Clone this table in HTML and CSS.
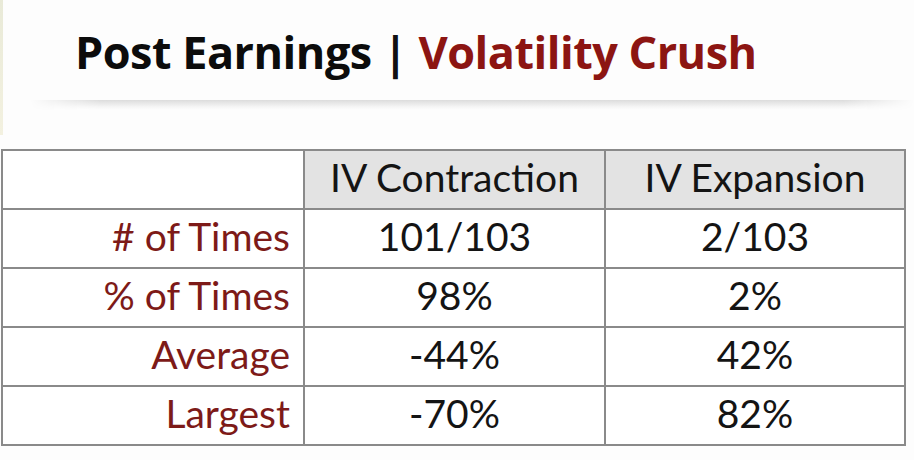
FILE: index.html
```html
<!DOCTYPE html>
<html>
<head>
<meta charset="utf-8">
<link rel="stylesheet" href="styles.css">
</head>
<body>
<div class="slide">
  <div class="edge"></div>
  <header class="title-bar">
    <h1 class="title"><span class="t-dark">Post Earnings</span> <span class="t-sep">|</span> <span class="t-red">Volatility Crush</span></h1>
  </header>
  <div class="shadow"></div>
  <table class="stats">
    <colgroup>
      <col class="c1"><col class="c2"><col class="c3">
    </colgroup>
    <tr class="head">
      <th class="blank"></th>
      <th>IV Contraction</th>
      <th>IV Expansion</th>
    </tr>
    <tr><td class="label"># of Times</td><td>101/103</td><td>2/103</td></tr>
    <tr><td class="label">% of Times</td><td>98%</td><td>2%</td></tr>
    <tr><td class="label">Average</td><td>-44%</td><td>42%</td></tr>
    <tr><td class="label">Largest</td><td>-70%</td><td>82%</td></tr>
  </table>
</div>
</body>
</html>
```
FILE: styles.css
```css
html, body {
  margin: 0;
  padding: 0;
  background: #fdfdfd;
}
.slide {
  position: relative;
  width: 914px;
  height: 460px;
  overflow: hidden;
  font-family: "Open Sans", "Liberation Sans", sans-serif;
}
.edge {
  position: absolute;
  left: 0;
  top: 0;
  width: 3px;
  height: 135px;
  background: linear-gradient(#e9ead8, #f3f1e0);
}
.title-bar {
  padding: 24px 0 0 75px;
  height: 74px;
}
.title {
  margin: 0;
  font-size: 45px;
  line-height: 56px;
  font-weight: 700;
  letter-spacing: -0.5px;
  white-space: nowrap;
}
.t-dark { color: #0c0c0c; }
.t-sep { color: #111; font-weight: 700; }
.t-red { color: #8c1512; }
.shadow {
  margin-left: 30px;
  height: 10px;
  margin-top: 2px;
  background: linear-gradient(#dcdcdc, #f6f6f6 70%, #fdfdfd);
  -webkit-mask-image: linear-gradient(90deg, transparent, #000 8%, #000 92%, transparent);
}
.stats {
  margin: 39px 0 0 1px;
  border-collapse: collapse;
  table-layout: fixed;
  width: 903px;
  background: #fff;
}
.c1 { width: 302px; }
.c2 { width: 301px; }
.c3 { width: 300px; }
.stats th, .stats td {
  border: 2px solid #8a8a8a;
  height: 53px;
  padding: 0 0 4px;
  font-family: Lato, "Open Sans", sans-serif;
  font-size: 39px;
  font-weight: 400;
  color: #141414;
  text-align: center;
  line-height: 1;
}
.stats th {
  background: #e3e3e3;
}
.stats th.blank {
  background: #fff;
}
.stats td.label {
  text-align: right;
  padding-right: 13px;
  color: #7d1a18;
}
```
